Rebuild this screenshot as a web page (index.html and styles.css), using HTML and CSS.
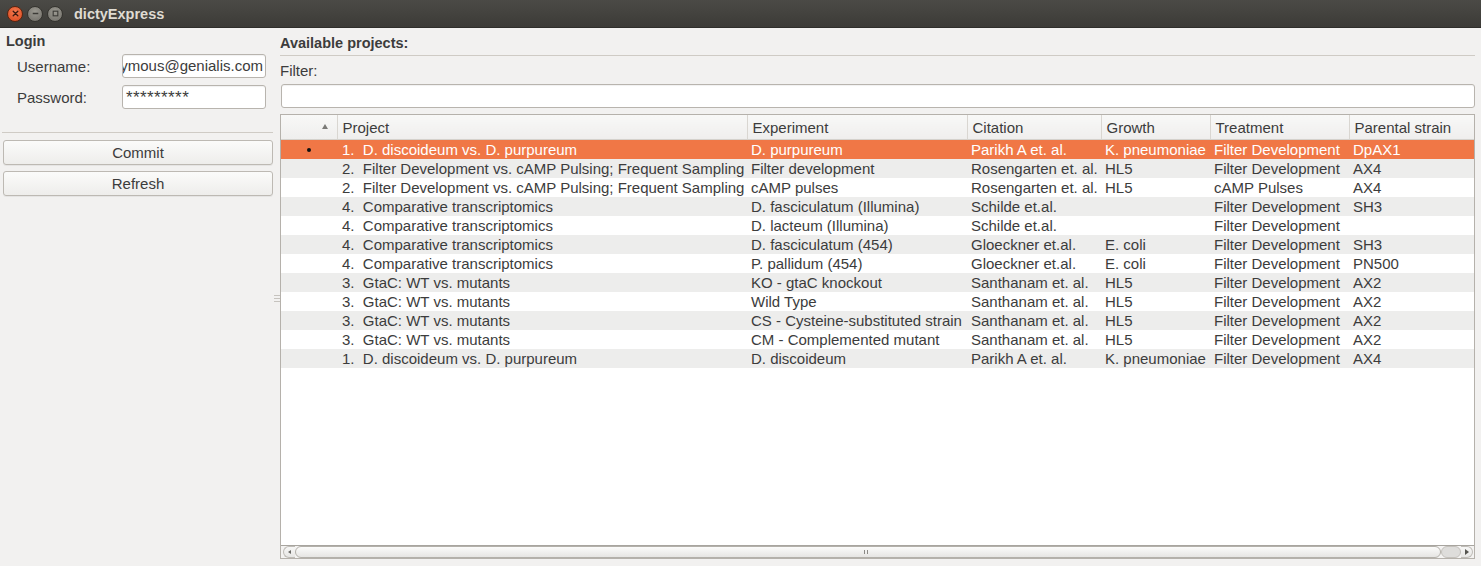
FILE: index.html
```html
<!DOCTYPE html>
<html>
<head>
<meta charset="utf-8">
<link rel="stylesheet" href="styles.css">
</head>
<body>
<div class="window">
  <div class="titlebar">
    <div class="wbtns">
      <span class="wb close"><svg width="14" height="14" viewBox="0 0 14 14"><path d="M4.5 4.5 L9.5 9.5 M9.5 4.5 L4.5 9.5" stroke="#3a1a10" stroke-width="1.4" stroke-linecap="round"/></svg></span>
      <span class="wb"><svg width="14" height="14" viewBox="0 0 14 14"><path d="M4 7 H10" stroke="#3c3b37" stroke-width="1.6"/></svg></span>
      <span class="wb"><svg width="14" height="14" viewBox="0 0 14 14"><rect x="4.5" y="4.5" width="5" height="5" fill="none" stroke="#3c3b37" stroke-width="1.2"/></svg></span>
    </div>
    <div class="title">dictyExpress</div>
  </div>
  <div class="main">
    <div class="left">
      <div class="grp-title">Login</div>
      <div class="form">
        <div class="frow"><label>Username:</label><div class="input user"><span>ymous@genialis.com</span></div></div>
        <div class="frow"><label>Password:</label><div class="input pass">*********</div></div>
      </div>
      <div class="sep"></div>
      <div class="btn">Commit</div>
      <div class="btn">Refresh</div>
    </div>
    <div class="splitter"><span class="grip"></span></div>
    <div class="right">
      <div class="grp-title rt">Available projects:</div>
      <div class="hline"></div>
      <div class="flabel">Filter:</div>
      <div class="input filter"></div>
      <div class="tablebox">
        <table class="grid">
          <colgroup>
            <col style="width:56px"><col style="width:410px"><col style="width:220px"><col style="width:134px"><col style="width:109px"><col style="width:139px"><col>
          </colgroup>
          <thead>
            <tr><th class="sortcol"><span class="arrow"></span></th><th>Project</th><th>Experiment</th><th>Citation</th><th>Growth</th><th>Treatment</th><th class="last">Parental strain</th></tr>
          </thead>
          <tbody>
            <tr class="sel"><td class="idx"><span class="dot"></span></td><td>1.&nbsp; D. discoideum vs. D. purpureum</td><td>D. purpureum</td><td>Parikh A et. al.</td><td>K. pneumoniae</td><td>Filter Development</td><td>DpAX1</td></tr>
            <tr class="alt"><td></td><td>2.&nbsp; Filter Development vs. cAMP Pulsing; Frequent Sampling</td><td>Filter development</td><td>Rosengarten et. al.</td><td>HL5</td><td>Filter Development</td><td>AX4</td></tr>
            <tr><td></td><td>2.&nbsp; Filter Development vs. cAMP Pulsing; Frequent Sampling</td><td>cAMP pulses</td><td>Rosengarten et. al.</td><td>HL5</td><td>cAMP Pulses</td><td>AX4</td></tr>
            <tr class="alt"><td></td><td>4.&nbsp; Comparative transcriptomics</td><td>D. fasciculatum (Illumina)</td><td>Schilde et.al.</td><td></td><td>Filter Development</td><td>SH3</td></tr>
            <tr><td></td><td>4.&nbsp; Comparative transcriptomics</td><td>D. lacteum (Illumina)</td><td>Schilde et.al.</td><td></td><td>Filter Development</td><td></td></tr>
            <tr class="alt"><td></td><td>4.&nbsp; Comparative transcriptomics</td><td>D. fasciculatum (454)</td><td>Gloeckner et.al.</td><td>E. coli</td><td>Filter Development</td><td>SH3</td></tr>
            <tr><td></td><td>4.&nbsp; Comparative transcriptomics</td><td>P. pallidum (454)</td><td>Gloeckner et.al.</td><td>E. coli</td><td>Filter Development</td><td>PN500</td></tr>
            <tr class="alt"><td></td><td>3.&nbsp; GtaC: WT vs. mutants</td><td>KO - gtaC knockout</td><td>Santhanam et. al.</td><td>HL5</td><td>Filter Development</td><td>AX2</td></tr>
            <tr><td></td><td>3.&nbsp; GtaC: WT vs. mutants</td><td>Wild Type</td><td>Santhanam et. al.</td><td>HL5</td><td>Filter Development</td><td>AX2</td></tr>
            <tr class="alt"><td></td><td>3.&nbsp; GtaC: WT vs. mutants</td><td>CS - Cysteine-substituted strain</td><td>Santhanam et. al.</td><td>HL5</td><td>Filter Development</td><td>AX2</td></tr>
            <tr><td></td><td>3.&nbsp; GtaC: WT vs. mutants</td><td>CM - Complemented mutant</td><td>Santhanam et. al.</td><td>HL5</td><td>Filter Development</td><td>AX2</td></tr>
            <tr class="alt"><td></td><td>1.&nbsp; D. discoideum vs. D. purpureum</td><td>D. discoideum</td><td>Parikh A et. al.</td><td>K. pneumoniae</td><td>Filter Development</td><td>AX4</td></tr>
          </tbody>
        </table>
        <div class="spacer"></div>
        <div class="hscroll">
          <div class="sbtn left-b"><span class="tri-l"></span></div>
          <div class="slider"><span class="sgrip"></span></div>
          <div class="trough"></div>
          <div class="sbtn right-b"><span class="tri-r"></span></div>
        </div>
      </div>
    </div>
  </div>
</div>
</body>
</html>
```
FILE: styles.css
```css
* { box-sizing: border-box; }
html, body { margin: 0; padding: 0; }
body {
  width: 1481px; height: 566px; overflow: hidden;
  font-family: "Liberation Sans", Arial, sans-serif;
  font-size: 15px;
  color: #3c3c3c;
  background: #f2f1f0;
}
.window { width: 1481px; height: 566px; display: flex; flex-direction: column; }
.titlebar {
  height: 28px; flex: none;
  background: linear-gradient(#4b4a46, #3c3b37);
  display: flex; align-items: center;
  padding-left: 7px;
  border-bottom: 1px solid #2f2e2b;
}
.wbtns { display: flex; gap: 4px; }
.wb {
  width: 16px; height: 16px; border-radius: 50%;
  background: radial-gradient(circle at 50% 35%, #9b9991, #6f6d67);
  border: 1px solid #35342f;
  display: flex; align-items: center; justify-content: center;
}
.wb svg { width: 13px; height: 13px; }
.wb.close { background: radial-gradient(circle at 50% 35%, #f47a50, #d9471c); border-color: #5a2510; }
.title {
  margin-left: 11px;
  color: #dfdbd2; font-weight: bold; font-size: 14.5px;
  font-family: "Liberation Sans", Arial, sans-serif;
}
.main { flex: 1; display: flex; min-height: 0; }
.left { width: 276px; flex: none; display: flex; flex-direction: column; padding: 4px 3px 0 3px; }
.grp-title { font-weight: bold; font-size: 14.5px; color: #3c3c3c; height: 18px; line-height: 18px; padding-left: 3px; }
.form { display: flex; flex-direction: column; gap: 7px; margin-top: 4px; padding-left: 14px; }
.frow { display: flex; align-items: center; height: 24px; }
.frow label { width: 105px; flex: none; }
.input {
  height: 24px; background: #fff;
  border: 1px solid #b8b4ae; border-radius: 3px;
  box-shadow: inset 0 1px 1px rgba(0,0,0,0.06);
  font-size: 15px; line-height: 22px; padding: 0 3px;
  overflow: hidden; white-space: nowrap;
}
.input.user, .input.pass { width: 144px; }
.input.user { display: flex; justify-content: flex-end; padding: 0 2px 0 0; }
.input.pass { padding-left: 3px; font-size: 17px; letter-spacing: 0.4px; line-height: 24px; }
.sep { height: 1px; background: #cfcbc5; margin: 23px 0 0 -1px; width: 271px; }
.btn {
  height: 25px; width: 270px; margin-top: 7px;
  border: 1px solid #bdb9b3; border-radius: 3px;
  background: linear-gradient(#fbfbfa, #eeedeb);
  box-shadow: 0 1px 0 rgba(0,0,0,0.05);
  text-align: center; line-height: 23px;
}
.btn + .btn { margin-top: 6px; }
.splitter { width: 4px; flex: none; position: relative; }
.grip {
  position: absolute; left: -2px; top: 267px; width: 6px; height: 7px;
  background: repeating-linear-gradient(#c6c3be 0 1px, transparent 1px 3px);
}
.right { flex: 1; display: flex; flex-direction: column; padding: 5px 6px 7px 0; min-width: 0; }
.rt { padding-left: 0; height: 20px; line-height: 20px; }
.hline { height: 1px; background: #cfcbc5; margin-top: 2px; }
.flabel { margin-top: 5px; height: 19px; line-height: 19px; }
.input.filter { margin-top: 4px; margin-left: 1px; flex: none; }
.tablebox {
  margin-top: 6px; flex: 1;
  border: 1px solid #b5b1ab; background: #fff;
  display: flex; flex-direction: column; min-height: 0; overflow: hidden;
}
.grid { border-collapse: collapse; table-layout: fixed; width: 1193px; }
.grid th {
  height: 24px; text-align: left; font-weight: normal;
  background: linear-gradient(#f8f8f7, #efeeed);
  border-bottom: 1px solid #d4d1cc;
  border-right: 1px solid #d9d6d1;
  padding: 1px 0 0 5px; white-space: nowrap; overflow: hidden;
  color: #3c3c3c;
}
.grid th.last { border-right: none; }
.grid th.sortcol { position: relative; }
.arrow {
  position: absolute; right: 9px; top: 9px;
  width: 0; height: 0;
  border-left: 3.5px solid transparent; border-right: 3.5px solid transparent;
  border-bottom: 5px solid #7b7a77;
}
.grid td {
  height: 19px; padding: 0 0 0 4px; white-space: nowrap; overflow: hidden;
  line-height: 19px;
}
.grid td:nth-child(2) { padding-left: 5px; }
.grid tr.alt td { background: #ededec; }
.grid tr.sel td { background: #f07746; color: #fff; }
.idx { position: relative; }
.dot { position: absolute; left: 26px; top: 8px; width: 4px; height: 4px; border-radius: 50%; background: #111; }
.spacer { flex: 1; }
.hscroll {
  height: 13px; flex: none; display: flex;
  border-top: 1px solid #a8a59f; margin-bottom: 0;
  background: #f4f3f2;
  padding: 0 1px 0 2px;
}
.sbtn { width: 12px; height: 12px; display: flex; align-items: center; justify-content: center; }
.tri-l { width:0;height:0; border-top: 2.5px solid transparent; border-bottom: 2.5px solid transparent; border-right: 3px solid #6b6a67; }
.tri-r { width:0;height:0; border-top: 3px solid transparent; border-bottom: 3px solid transparent; border-left: 4px solid #55544f; }
.left-b { border: 1px solid #bfbcb7; border-radius: 6px 0 0 6px; border-right: none; background: linear-gradient(#f7f7f6, #e7e6e4); }
.right-b { border: 1px solid #bfbcb7; border-radius: 0 6px 6px 0; border-left: none; background: linear-gradient(#f7f7f6, #e7e6e4); }
.slider {
  width: 1146px; height: 12px; border: 1px solid #b3b0aa; border-radius: 6px;
  background: linear-gradient(#fbfbfa, #e6e5e3);
  position: relative;
}
.sgrip {
  position: absolute; left: 568px; top: 3px; width: 6px; height: 4px;
  background: repeating-linear-gradient(90deg, #8c8a86 0 1px, transparent 1px 3px);
}
.trough { flex: 1; height: 12px; border: 1px solid #c4c1bc; border-radius: 6px; background: #dedddb; }
```
